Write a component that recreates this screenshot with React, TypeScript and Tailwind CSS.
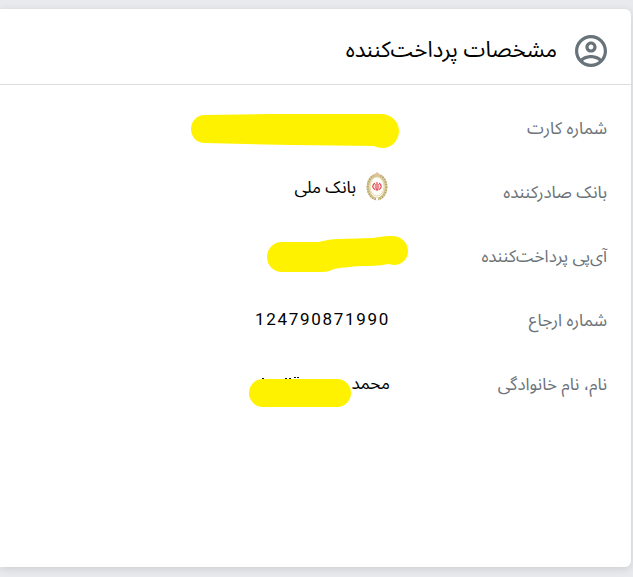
import type { ReactNode } from 'react'

const UserIcon = () => (
  <svg viewBox="2 2 20 20" className="size-8 shrink-0 text-[#677279]" fill="currentColor" aria-hidden="true">
    <path d="M12 2C6.48 2 2 6.48 2 12s4.48 10 10 10 10-4.48 10-10S17.52 2 12 2zM7.07 18.28c.43-.9 3.05-1.78 4.93-1.78s4.51.88 4.93 1.78C15.57 19.36 13.86 20 12 20s-3.57-.64-4.93-1.72zm11.29-1.45c-1.43-1.74-4.9-2.33-6.36-2.33s-4.93.59-6.36 2.33C4.62 15.49 4 13.82 4 12c0-4.41 3.59-8 8-8s8 3.59 8 8c0 1.82-.62 3.49-1.64 4.83zM12 6c-1.94 0-3.5 1.56-3.5 3.5S10.06 13 12 13s3.5-1.56 3.5-3.5S13.94 6 12 6zm0 5c-.83 0-1.5-.67-1.5-1.5S11.17 8 12 8s1.5.67 1.5 1.5S12.83 11 12 11z" />
  </svg>
)

const BankLogo = () => (
  <svg viewBox="0 0 22 30" className="mb-1.5 h-[30px] w-[22px] shrink-0" fill="none" aria-hidden="true">
    <ellipse cx="11" cy="16" rx="9" ry="11.8" stroke="#d9cb98" strokeWidth="3" />
    <ellipse cx="11" cy="16" rx="9.4" ry="12.3" stroke="#b5a36b" strokeWidth="2" strokeDasharray="1.2 1.4" />
    <ellipse cx="11" cy="15.5" rx="7" ry="9.6" fill="#fffdf8" stroke="#dccb98" strokeWidth="0.8" />
    <path d="M7 4.5 11 1l4 3.5-4 1.3z" fill="#e2c29a" />
    <path d="M10 28h2" stroke="#fff" strokeWidth="3" />
    <g stroke="#e0404f" strokeWidth="1.2" strokeLinecap="round">
      <path d="M11 11.5v8" />
      <path d="M8.4 12.5c-2.2 2-2.2 4.5.6 6" />
      <path d="M13.6 12.5c2.2 2 2.2 4.5-.6 6" />
      <path d="M9.5 13.5c-.7 2-.4 3.5 1 5M12.5 13.5c.7 2 .4 3.5-1 5" strokeWidth="0.8" />
    </g>
  </svg>
)

const CardMark = () => (
  <svg viewBox="0 0 208 34" className="absolute -right-[9px] top-4 h-[34px] w-[208px]" fill="#fff200" aria-hidden="true">
    <path d="M14 1 80 0h110c11 0 18 8 18 17s-7 17-16 17c-4 0-6-1-9-2l-83-1-86-2C5 29 0 22 0 15S5 1 14 1z" />
  </svg>
)

const IpMark = () => (
  <svg viewBox="0 0 141 37" className="absolute -right-[18px] top-2.5 h-[37px] w-[141px]" fill="#fff200" aria-hidden="true">
    <path d="M15 6h37c8-2 12-3 21-3l32-1c8-1 12-2 20-2 10 0 16 7 16 15s-6 14-14 14l-6-1c-9 2-18 2-27 2-9 1-17 1-27 3-6 3-9 3-16 3H15C6 36 0 29 0 21S6 6 15 6z" />
  </svg>
)

const NameMark = () => (
  <svg viewBox="0 0 102 31" className="absolute right-[39px] top-[22px] h-[31px] w-[102px]" aria-hidden="true">
    <path d="M13 2.5h2M36 2.5h2M40 2.5h2M45 1.5h2M48 1.5h2" stroke="#111" />
    <rect y="3" width="102" height="28" rx="14" fill="#fff200" />
  </svg>
)

const Row = ({ label, children }: { label: string, children?: ReactNode }) => (
  <div className="flex h-16">
    <dt className="flex w-[217px] shrink-0 items-center text-[#6b7278]">{label}</dt>
    <dd className="relative flex flex-1 items-center text-black">{children}</dd>
  </div>
)

const App = () => {
  return (
    <div dir="rtl" className="min-h-screen bg-[#e9eaee] py-[9px] pr-0.5 font-['Noto_Sans_Arabic','Vazirmatn','Noto_Sans','DejaVu_Sans',sans-serif]">
      <section className="min-h-[558px] rounded-r-md bg-white shadow-[0_2px_8px_rgba(0,0,0,0.12)]">
        <header className="flex h-[76px] items-center gap-[18px] border-b border-[#dcdddf] pt-2 pr-6">
          <UserIcon />
          <h2 className="text-[22px] text-black">مشخصات پرداخت‌کننده</h2>
        </header>
        <dl className="pt-[13px] pr-6 text-[17px]">
          <Row label="شماره کارت">
            <CardMark />
          </Row>
          <Row label="بانک صادرکننده">
            <span className="flex items-center gap-2.5 pr-0.5 pb-2.5">
              <BankLogo />
              بانک ملی
            </span>
          </Row>
          <Row label="آی‌پی پرداخت‌کننده">
            <IpMark />
          </Row>
          <Row label="شماره ارجاع">
            <span className="pb-1 font-[Roboto,sans-serif] tracking-widest" dir="ltr">124790871990</span>
          </Row>
          <Row label="نام، نام خانوادگی">
            <span className="pb-0.5">محمد</span>
            <NameMark />
          </Row>
        </dl>
      </section>
    </div>
  )
}

export default App
